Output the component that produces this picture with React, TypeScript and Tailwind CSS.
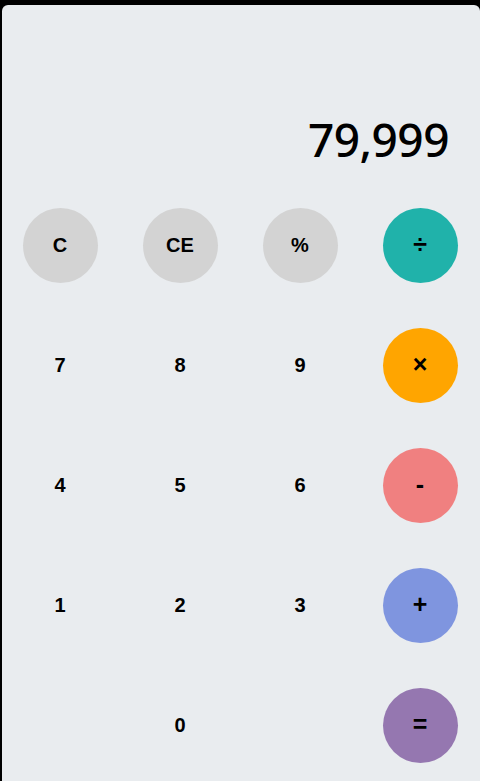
const KEYS: { label: string; cls: string }[] = [
  { label: 'C', cls: 'bg-[#d3d3d3] text-[20px]' },
  { label: 'CE', cls: 'bg-[#d3d3d3] text-[20px]' },
  { label: '%', cls: 'bg-[#d3d3d3] text-[20px]' },
  { label: '÷', cls: 'bg-[#20b2aa] text-[25px]' },
  { label: '7', cls: 'text-[20px]' },
  { label: '8', cls: 'text-[20px]' },
  { label: '9', cls: 'text-[20px]' },
  { label: '×', cls: 'bg-[#ffa500] text-[25px]' },
  { label: '4', cls: 'text-[20px]' },
  { label: '5', cls: 'text-[20px]' },
  { label: '6', cls: 'text-[20px]' },
  { label: '-', cls: 'bg-[#f08080] text-[25px]' },
  { label: '1', cls: 'text-[20px]' },
  { label: '2', cls: 'text-[20px]' },
  { label: '3', cls: 'text-[20px]' },
  { label: '+', cls: 'bg-[#7f95df] text-[25px]' },
  { label: '', cls: '' },
  { label: '0', cls: 'text-[20px]' },
  { label: '', cls: '' },
  { label: '=', cls: 'bg-[#9577b0] text-[25px]' },
];

export default function App() {
  return (
    <div className="min-h-screen bg-black pt-[5px] pl-[2px] overflow-hidden">
      <div className="bg-[#e9ecef] rounded-t-md h-[800px]">
        {/* Display */}
        <div className="h-[180px] flex items-end justify-end pr-[31px] pb-[11px]">
          <span
            className="text-[46px] font-medium tracking-[-0.5px] text-black"
            style={{ fontFamily: '"Noto Sans", sans-serif' }}>
            79,999
          </span>
        </div>

        {/* Keypad */}
        <div className="grid grid-cols-4 w-[480px] -ml-[2px]">
          {KEYS.map((k, i) => (
            <div key={i} className="h-[120px] flex items-center justify-center">
              {k.label && (
                <button
                  className={`w-[75px] h-[75px] rounded-full flex items-center justify-center font-bold text-black ${k.cls}`}
                  style={{ fontFamily: '"Liberation Sans", Arial, sans-serif' }}>
                  {k.label}
                </button>
              )}
            </div>
          ))}
        </div>
      </div>
    </div>
  );
}
